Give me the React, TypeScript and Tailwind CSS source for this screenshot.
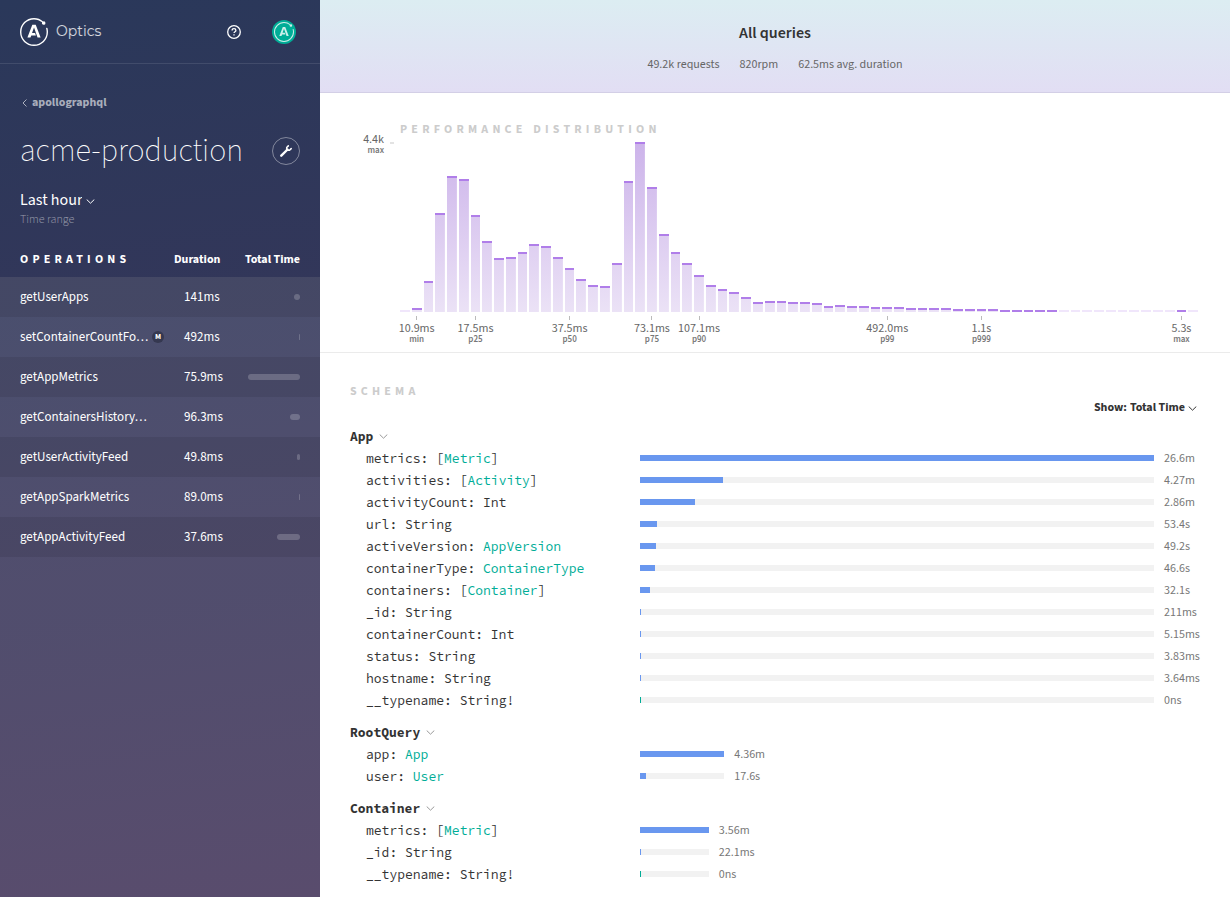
import { useId } from "react";
import { SiApollographql } from "react-icons/si";

type Operation = { name: string; duration: string; width: number; mutation?: boolean };

const operations: Operation[] = [
  { name: "getUserApps", duration: "141ms", width: 6 },
  { name: "setContainerCountFo…", duration: "492ms", width: 1, mutation: true },
  { name: "getAppMetrics", duration: "75.9ms", width: 52 },
  { name: "getContainersHistory…", duration: "96.3ms", width: 10 },
  { name: "getUserActivityFeed", duration: "49.8ms", width: 3 },
  { name: "getAppSparkMetrics", duration: "89.0ms", width: 1 },
  { name: "getAppActivityFeed", duration: "37.6ms", width: 23 },
];

// Bucket heights in pixels; 0 is an empty bucket.
const buckets = [
  0, 4, 31, 99, 136, 133, 97, 71, 54, 55, 60, 68, 66, 55, 44, 33, 27, 26, 49, 131, 170, 125, 78,
  60, 49, 37, 27, 23, 20, 15, 10, 11, 11, 10, 10, 9, 6, 7, 6, 6, 5, 5, 5, 4, 4, 4, 4, 3, 3, 3, 3,
  2, 2, 2, 2, 2, 0, 0, 0, 0, 0, 0, 0, 0, 0, 0, 2, 0,
];

const percentiles: Record<number, [string, string]> = {
  1: ["10.9ms", "min"],
  6: ["17.5ms", "p25"],
  14: ["37.5ms", "p50"],
  21: ["73.1ms", "p75"],
  25: ["107.1ms", "p90"],
  41: ["492.0ms", "p99"],
  49: ["1.1s", "p999"],
  66: ["5.3s", "max"],
};

type Field = { name: string; type: string; link?: boolean; list?: boolean; label: string; seconds: number };
type SchemaType = { name: string; fields: Field[] };

const schema: SchemaType[] = [
  {
    name: "App",
    fields: [
      { name: "metrics", type: "Metric", link: true, list: true, label: "26.6m", seconds: 1596 },
      { name: "activities", type: "Activity", link: true, list: true, label: "4.27m", seconds: 256.2 },
      { name: "activityCount", type: "Int", label: "2.86m", seconds: 171.6 },
      { name: "url", type: "String", label: "53.4s", seconds: 53.4 },
      { name: "activeVersion", type: "AppVersion", link: true, label: "49.2s", seconds: 49.2 },
      { name: "containerType", type: "ContainerType", link: true, label: "46.6s", seconds: 46.6 },
      { name: "containers", type: "Container", link: true, list: true, label: "32.1s", seconds: 32.1 },
      { name: "_id", type: "String", label: "211ms", seconds: 0.211 },
      { name: "containerCount", type: "Int", label: "5.15ms", seconds: 0.00515 },
      { name: "status", type: "String", label: "3.83ms", seconds: 0.00383 },
      { name: "hostname", type: "String", label: "3.64ms", seconds: 0.00364 },
      { name: "__typename", type: "String!", label: "0ns", seconds: 0 },
    ],
  },
  {
    name: "RootQuery",
    fields: [
      { name: "app", type: "App", link: true, label: "4.36m", seconds: 261.6 },
      { name: "user", type: "User", link: true, label: "17.6s", seconds: 17.6 },
    ],
  },
  {
    name: "Container",
    fields: [
      { name: "metrics", type: "Metric", link: true, list: true, label: "3.56m", seconds: 213.6 },
      { name: "_id", type: "String", label: "22.1ms", seconds: 0.0221 },
      { name: "__typename", type: "String!", label: "0ns", seconds: 0 },
    ],
  },
];

const longest = 1596;

function Chevron({ className }: { className: string }) {
  return (
    <svg viewBox="0 0 9 5" className={className} fill="none" stroke="currentColor" aria-hidden="true">
      <path d="M0.7 0.5 4.500 4.200 8.300 0.5" />
    </svg>
  );
}

function Sidebar() {
  const rangeId = useId();
  return (
    <aside className="flex w-80 shrink-0 flex-col bg-linear-[172deg,#2a385a,#423459] text-white">
      <header className="flex h-16 items-center border-b border-white/10 px-5">
        <a href="#home" className="flex items-center gap-2">
          <SiApollographql className="size-7" aria-hidden="true" />
          <span className="pb-[2px] font-[Montserrat,Lato,sans-serif] text-sm leading-5 text-white/80">Optics</span>
        </a>
        <button type="button" aria-label="Help" className="ml-auto">
          <svg viewBox="0 0 14 14" className="size-[14px]" fill="none" stroke="currentColor" strokeWidth="1.3" aria-hidden="true">
            <circle cx="7" cy="7" r="6.3" />
            <path d="M5.1 5.5C5.1 4.400 5.900 3.700 7 3.700s1.900.7 1.900 1.700c0 1.200-1.900 1.400-1.900 2.700" />
            <path d="M7 9.2v1.4" />
          </svg>
        </button>
        <button type="button" aria-label="Account" className="mr-1 ml-[31px] flex size-6 items-center justify-center rounded-full bg-[#00ad97]">
          <SiApollographql className="size-5 text-white/80" aria-hidden="true" />
        </button>
      </header>

      <div className="px-5 pt-[31px]">
        <a href="#team" className="flex items-center text-xs leading-4 font-bold text-white/60">
          <svg viewBox="0 0 5 8" className="mr-[5px] ml-[2px] h-2 w-[5px]" fill="none" stroke="currentColor" aria-hidden="true">
            <path d="M4.5 0.5 1 4l3.500 3.500" />
          </svg>
          apollographql
        </a>
        <div className="mt-5 flex items-center justify-between">
          <h1 className="text-[32px] leading-10 font-extralight">acme-production</h1>
          <button type="button" aria-label="Settings" className="flex size-7 items-center justify-center rounded-full border border-white/40">
            <svg viewBox="0 0 12 12" className="size-3" fill="none" stroke="currentColor" aria-hidden="true">
              <path d="M1.300 10.700 7.500 4.500" strokeWidth="2.400" strokeLinecap="round" />
              <path d="M8.300 0.900 6.700 2.500v2.800h2.800L11.200 3.600" strokeWidth="1.500" strokeLinecap="round" strokeLinejoin="round" />
            </svg>
          </button>
        </div>
        <div className="mt-[18px] flex flex-col-reverse items-start">
          <label htmlFor={rangeId} className="pt-px text-xs leading-4 font-light text-white/50">Time range</label>
          <span className="flex items-center gap-1">
            <select id={rangeId} className="field-sizing-content appearance-none bg-transparent text-base leading-[22px]">
              <option>Last hour</option>
            </select>
            <Chevron className="mt-[2px] h-[5px] w-[9px]" />
          </span>
        </div>
      </div>

      <table className="mt-[14px] w-full table-fixed border-collapse text-left">
        <thead>
          <tr className="h-[35px] text-xs font-bold">
            <th className="w-[174px] pl-5 font-bold tracking-[0.35em]">OPERATIONS</th>
            <th className="w-14 font-bold">Duration</th>
            <th className="pr-5 text-right font-bold whitespace-nowrap">Total Time</th>
          </tr>
        </thead>
        <tbody className="bg-white/12">
          {operations.map((op) => (
            <tr key={op.name} className="h-10 text-[13px] leading-5 odd:bg-black/8">
              <td className="pl-5">
                <div className="flex items-center gap-1">
                  <a href="#operation" className="w-32 whitespace-nowrap">{op.name}</a>
                  {op.mutation && (
                    <span className="flex size-3 items-center justify-center rounded-full bg-[#353850] text-[8px] leading-3 font-bold">M</span>
                  )}
                </div>
              </td>
              <td className="pl-[10px]">{op.duration}</td>
              <td className="pr-5">
                <div className="ml-auto h-[6px] rounded-[3px] bg-white/20" style={{ width: op.width }} />
              </td>
            </tr>
          ))}
        </tbody>
      </table>
      <div className="flex-1 bg-white/12" />
    </aside>
  );
}

function Distribution() {
  return (
    <section className="flex border-b border-[#ebebeb] px-[30px] pt-7 pb-[7px]">
      <div className="flex w-[50px] items-start justify-end pt-[13px] pr-[6px]">
        <div className="text-right">
          <div className="text-xs leading-[11px] text-[#666]">4.4k</div>
          <div className="text-[9px] leading-[11px] font-semibold text-[#777]">max</div>
        </div>
        <div className="mt-2 ml-[6px] h-[2px] w-1 bg-[#e3e3e3]" />
      </div>
      <div className="min-w-0 flex-1">
        <h2 className="pt-px text-xs leading-4 font-bold tracking-[0.35em] text-[#ccc]">PERFORMANCE DISTRIBUTION</h2>
        <div className="mt-1 flex">
          {buckets.map((height, i) => (
            <div key={i} className="min-w-0 flex-1">
              <div className="flex h-[170px] items-end pr-[2px]">
                <div
                  className={
                    height
                      ? "w-full border-t-2 border-[#b07ee9] bg-linear-[to_top,#ebe2f6,#ccb3ea] bg-size-[100%_170px] bg-bottom bg-no-repeat"
                      : "w-full bg-[#f0e6fb]"
                  }
                  style={{ height: height || 2 }}
                />
              </div>
              {percentiles[i] && (
                <div className="flex flex-col items-center pt-1 pr-[2px] whitespace-nowrap">
                  <div className="h-1 w-px bg-[#bbb]" />
                  <div className="mt-[3px] text-xs leading-[11px] text-[#666]">{percentiles[i][0]}</div>
                  <div className="text-[9px] leading-[11px] font-semibold text-[#777]">{percentiles[i][1]}</div>
                </div>
              )}
            </div>
          ))}
        </div>
      </div>
    </section>
  );
}

function FieldRow({ field, max }: { field: Field; max: number }) {
  return (
    <li className="flex h-[22px] items-center">
      <div className="w-[290px] shrink-0 pt-[2px] pl-4 font-['Source_Code_Pro','Liberation_Mono',monospace] text-[13px] leading-4 whitespace-pre text-[#333]">
        {field.name}: {field.list && "["}
        {field.link ? <a href="#type" className="text-[#00ad97]">{field.type}</a> : field.type}
        {field.list && "]"}
      </div>
      <div className="flex flex-1 items-center pr-[46px]">
        <div className="h-[6px] shrink-0 bg-[#f2f2f2]" style={{ width: `${(max / longest) * 100}%` }}>
          <div
            className={field.seconds ? "h-full min-w-px bg-[#6997ef]" : "h-full min-w-px bg-[#00ad97]"}
            style={{ width: `${(field.seconds / max) * 100}%` }}
          />
        </div>
        <span className="w-0 pt-[2px] pl-[10px] text-xs leading-4 whitespace-nowrap text-[#777]">{field.label}</span>
      </div>
    </li>
  );
}

function Schema() {
  const showId = useId();
  return (
    <section className="px-[30px] pt-[31px]">
      <h2 className="text-xs leading-4 font-bold tracking-[0.35em] text-[#ccc]">SCHEMA</h2>
      <div className="flex items-center justify-end gap-[3px] pr-[3px] text-xs leading-4 font-bold text-[#333]">
        <span className="flex">
          <label htmlFor={showId} className="mr-[3px]">Show:</label>
          <select id={showId} className="field-sizing-content appearance-none bg-transparent">
            <option>Total Time</option>
          </select>
        </span>
        <Chevron className="h-[5px] w-[9px]" />
      </div>
      <div className="mt-[9px] flex flex-col gap-[10px]">
        {schema.map((type) => (
          <div key={type.name}>
            <h3 className="flex h-[22px] items-center">
              <button type="button" className="flex items-center gap-[6px] font-['Source_Code_Pro','Liberation_Mono',monospace] text-[13px] leading-4 font-bold text-[#333]">
                <span className="pt-px">{type.name}</span>
                <Chevron className="h-[5px] w-[9px] text-[#999]" />
              </button>
            </h3>
            <ul>
              {type.fields.map((field) => (
                <FieldRow key={field.name} field={field} max={Math.max(...type.fields.map((f) => f.seconds))} />
              ))}
            </ul>
          </div>
        ))}
      </div>
    </section>
  );
}

export default function App() {
  return (
    <div className="flex min-h-screen bg-white font-['Source_Sans_3','Noto_Sans_CJK_SC',sans-serif]">
      <Sidebar />
      <main className="min-w-0 flex-1">
        <header className="border-b border-[#d3cfe6] bg-linear-to-b from-[#dcedf2] to-[#e2def4] pt-[22px] pb-[19px] text-center">
          <h1 className="text-base leading-[22px] font-semibold text-[#333]">All queries</h1>
          <div className="mt-[13px] flex justify-center gap-5 text-xs leading-4 text-[#666]">
            <span>49.2k requests</span>
            <span>820rpm</span>
            <span>62.5ms avg. duration</span>
          </div>
        </header>
        <Distribution />
        <Schema />
      </main>
    </div>
  );
}
